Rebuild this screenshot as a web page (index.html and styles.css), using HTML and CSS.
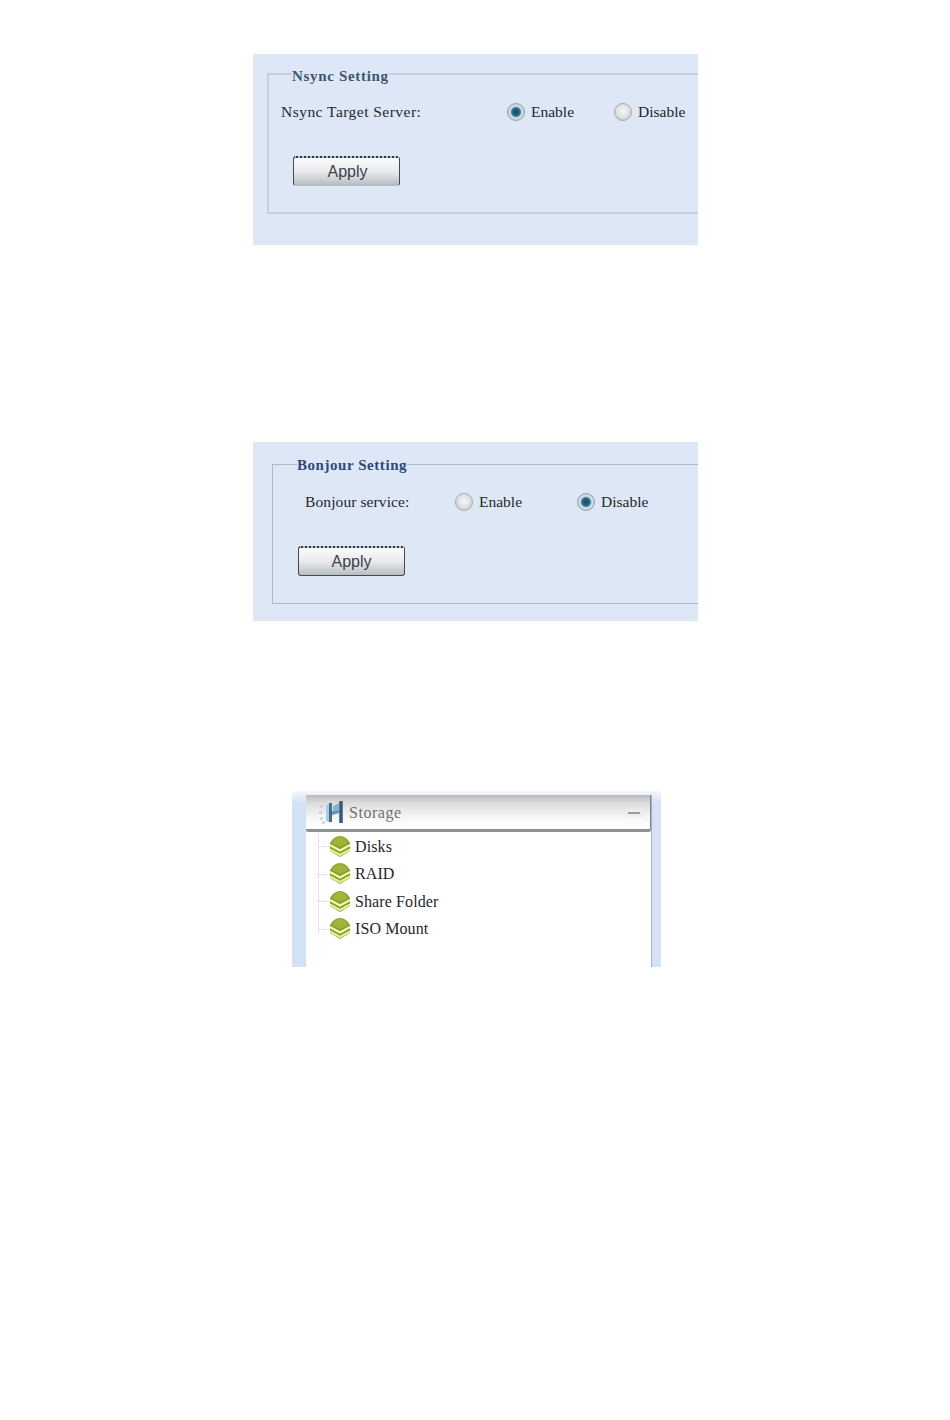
FILE: index.html
```html
<!DOCTYPE html>
<html lang="en">
<head>
    <meta charset="UTF-8">
    <title>Nsync, Bonjour and Storage</title>
    <link rel="stylesheet" href="styles.css">
</head>
<body>
    <!-- Nsync panel -->
    <div class="panel panel-nsync">
        <fieldset class="setting">
            <legend>Nsync Setting</legend>
            <div class="row">
                <span class="row-label">Nsync Target Server:</span>
                <label class="option"><input type="radio" name="nsync" checked>Enable</label>
                <label class="option"><input type="radio" name="nsync">Disable</label>
            </div>
            <button class="apply-btn" type="button">Apply</button>
        </fieldset>
    </div>

    <!-- Bonjour panel -->
    <div class="panel panel-bonjour">
        <fieldset class="setting">
            <legend>Bonjour Setting</legend>
            <div class="row">
                <span class="row-label">Bonjour service:</span>
                <label class="option"><input type="radio" name="bonjour">Enable</label>
                <label class="option"><input type="radio" name="bonjour" checked>Disable</label>
            </div>
            <button class="apply-btn" type="button">Apply</button>
        </fieldset>
    </div>

    <!-- Storage menu -->
    <div class="menu">
        <div class="menu-inner">
            <div class="menu-head">
                <svg class="storage-icon" width="26" height="26" viewBox="0 0 26 26">
                    <path d="M3 7l3-1M2 13l3-1M3 19l3-1M5 23l3-1" stroke="#c6ccd1" stroke-width="2" fill="none"/>
                    <path d="M9 5l3-1v18l-3-1z" fill="#a9cbe2"/>
                    <path d="M15 11l7-1v3l-7 2z" fill="#5f93b8"/>
                    <path d="M16 6l6-3v7l-6 2z" fill="#86b2d0"/>
                    <path d="M13.500 3v19" stroke="#47708f" stroke-width="3" fill="none"/>
                    <path d="M24 1v22" stroke="#34597a" stroke-width="3.500" fill="none"/>
                </svg>
                <span class="menu-title">Storage</span>
                <span class="collapse"></span>
            </div>
            <ul class="tree">
                <li><svg class="stack-icon" width="22" height="24" viewBox="0 0 22 24"><use href="#stack"/></svg>Disks</li>
                <li><svg class="stack-icon" width="22" height="24" viewBox="0 0 22 24"><use href="#stack"/></svg>RAID</li>
                <li><svg class="stack-icon" width="22" height="24" viewBox="0 0 22 24"><use href="#stack"/></svg>Share Folder</li>
                <li><svg class="stack-icon" width="22" height="24" viewBox="0 0 22 24"><use href="#stack"/></svg>ISO Mount</li>
            </ul>
        </div>
    </div>

    <svg class="defs" width="0" height="0">
        <defs>
            <g id="stack">
                <path d="M11 1q4 0 7 3l3 4v8l-10 6-10-6V8l3-4q3-3 7-3z" fill="#869e28"/>
                <path d="M11 2q4 0 6 3l2 3-8 4-8-4 2-3q2-3 6-3z" fill="#9fb53a"/>
                <path d="M1 10l10 5.500 10-5.500" stroke="#f4f7b8" stroke-width="2.200" fill="none"/>
                <path d="M1 14.500l10 5.500 10-5.500" stroke="#e6ee98" stroke-width="2" fill="none"/>
            </g>
        </defs>
    </svg>
</body>
</html>
```

FILE: styles.css
```css
/* Global styles */
body {
    margin: 0;
    padding: 54px 0 0 253px;
    background-color: #fff;
    font-family: 'Liberation Serif', serif;
    color: #23272b;
}

/* Blue panels */
.panel {
    width: 445px;
    overflow: hidden;
    background-color: #dde7f6;
    box-sizing: border-box;
}

.panel-nsync {
    height: 191px;
    padding: 9px 0 0 14px;
}

.panel-bonjour {
    height: 179px;
    margin-top: 197px;
    padding: 12px 0 0 19px;
}

.setting {
    width: 520px;
    height: 150px;
    margin: 0;
    padding: 0;
    box-sizing: border-box;
    border: 1px solid #aeb8c6;
    border-right: none;
}

.panel-nsync .setting {
    height: 151px;
    border-width: 2px 0 2px 2px;
    border-color: #c3cede;
}

.setting legend {
    margin-left: 24px;
    padding: 2px 0 0;
    font-size: 15px;
    font-weight: bold;
    letter-spacing: 0.55px;
    line-height: 18px;
    color: #2f4a78;
}

.panel-nsync .setting legend {
    margin-left: 23px;
    padding-top: 4px;
    letter-spacing: 0.68px;
    color: #3c566f;
}

/* Radio row */
.row {
    display: flex;
    align-items: center;
    height: 22px;
    margin-top: 17px;
    font-size: 15.5px;
}

.panel-nsync .row {
    margin-top: 16px;
    padding-left: 12px;
}

.panel-bonjour .row {
    padding-left: 32px;
}

.row-label {
    width: 226px;
    letter-spacing: 0.47px;
}

.panel-bonjour .row-label {
    width: 150px;
    letter-spacing: 0.1px;
}

.option {
    display: flex;
    align-items: center;
    width: 107px;
}

.panel-bonjour .option {
    width: 122px;
}

.option input {
    appearance: none;
    width: 18px;
    height: 18px;
    margin: 0 6px 0 0;
    border: 1px solid #a3aab0;
    border-radius: 50%;
    background: radial-gradient(circle at 50% 45%, #f6f7f7 0, #e0e3e3 50%, #b4babf 100%);
}

.option input:checked {
    border-color: #8ea6b8;
    background: radial-gradient(circle, #164a60 0, #2a7088 36%, #d7e3ec 52%, #9fb2c2 100%);
}

/* Apply button */
.apply-btn {
    display: block;
    width: 107px;
    height: 30px;
    margin-top: 33px;
    padding: 0;
    border: 1px solid #3d4a58;
    border-top: 2px dotted #2e3a48;
    border-radius: 3px;
    background: linear-gradient(#fbfcfc, #e8eaec 50%, #b9bdc2);
    font-family: 'Liberation Sans', sans-serif;
    font-size: 16px;
    color: #3c4248;
}

.panel-nsync .apply-btn {
    margin-left: 24px;
    padding-left: 2px;
    border-bottom-color: #b4bac2;
}

.panel-bonjour .apply-btn {
    margin-left: 25px;
}

/* Storage menu */
.menu {
    box-sizing: border-box;
    width: 369px;
    height: 176px;
    margin: 170px 0 0 39px;
    padding: 4px 9px 0 14px;
    background: linear-gradient(#f3f7fc, #d3e2f5 12px);
}

.menu-inner {
    height: 100%;
    background-color: #fff;
    border-right: 1px solid #a9b0bb;
}

.menu-head {
    display: flex;
    align-items: center;
    box-sizing: border-box;
    height: 37px;
    padding: 2px 10px 0 11px;
    border-bottom: 3px solid #8e9297;
    border-right: 1px solid #83888e;
    border-radius: 0 0 2px 2px;
    background: linear-gradient(#bcbcbc, #dedede 25%, #fbfbfb 75%, #fff);
}

.storage-icon {
    flex: none;
}

.menu-title {
    flex: 1;
    margin-left: 6px;
    font-size: 16px;
    letter-spacing: 0.55px;
    color: #6d7074;
}

.collapse {
    width: 12px;
    height: 2px;
    background-color: #9a9ea3;
    box-shadow: 0 0 0 3px #eeeeee;
}

.tree {
    list-style: none;
    margin: 1px 0 0 12px;
    padding: 0;
    border-left: 1px dotted #cfd3d6;
    height: 100px;
    font-size: 16px;
    letter-spacing: 0.1px;
}

.tree li {
    display: flex;
    align-items: center;
    height: 27.5px;
}

.tree li::before {
    content: "";
    flex: none;
    width: 10px;
    border-top: 1px dotted #cfd3d6;
}

.stack-icon {
    flex: none;
    margin-right: 4px;
}

.defs {
    position: absolute;
}
```
